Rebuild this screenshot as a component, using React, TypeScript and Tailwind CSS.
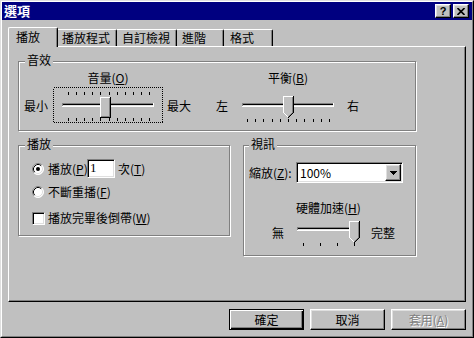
import React from 'react';

const sunken =
  'border border-t-[#808080] border-l-[#808080] border-r-white border-b-white shadow-[inset_1px_1px_#000,inset_-1px_-1px_#dfdfdf]';
const raised =
  'border border-t-white border-l-white border-r-black border-b-black shadow-[inset_-1px_-1px_#808080,inset_1px_1px_#dfdfdf]';
const etched = 'relative border border-[#808080] shadow-[inset_1px_1px_#fff,1px_1px_#fff]';

function Track({ x, y, w }: { x: number; y: number; w: number }) {
  return (
    <g>
      <rect x={x} y={y} width={w} height={1} fill="#808080" />
      <rect x={x} y={y} width={1} height={3} fill="#808080" />
      <rect x={x + 1} y={y + 1} width={w - 2} height={1} fill="#000" />
      <rect x={x + 1} y={y + 2} width={w - 2} height={1} fill="#dfdfdf" />
      <rect x={x} y={y + 3} width={w} height={1} fill="#fff" />
      <rect x={x + w - 1} y={y} width={1} height={4} fill="#fff" />
    </g>
  );
}

function RectThumb({ x, y, w, h }: { x: number; y: number; w: number; h: number }) {
  return (
    <g>
      <rect x={x} y={y} width={w} height={h} fill="#c0c0c0" />
      <rect x={x} y={y} width={w - 1} height={1} fill="#fff" />
      <rect x={x} y={y} width={1} height={h - 1} fill="#fff" />
      <rect x={x + w - 1} y={y} width={1} height={h} fill="#000" />
      <rect x={x} y={y + h - 1} width={w} height={1} fill="#000" />
      <rect x={x + w - 2} y={y + 1} width={1} height={h - 2} fill="#808080" />
      <rect x={x + 1} y={y + h - 2} width={w - 2} height={1} fill="#808080" />
    </g>
  );
}

// thumb with a point at the bottom, 11px wide
function PointThumb({ x, y, body }: { x: number; y: number; body: number }) {
  const diag = [1, 2, 3, 4, 5];
  return (
    <g>
      <rect x={x} y={y} width={11} height={body + 1} fill="#c0c0c0" />
      {diag.map((k) => (
        <rect key={'f' + k} x={x + k} y={y + body + k} width={Math.max(11 - 2 * k, 1)} height={1} fill="#c0c0c0" />
      ))}
      <rect x={x} y={y} width={10} height={1} fill="#fff" />
      <rect x={x} y={y} width={1} height={body + 1} fill="#fff" />
      {diag.map((k) => (
        <rect key={'w' + k} x={x + k} y={y + body + k} width={1} height={1} fill="#fff" />
      ))}
      <rect x={x + 9} y={y + 1} width={1} height={body} fill="#808080" />
      {[1, 2, 3, 4].map((k) => (
        <rect key={'g' + k} x={x + 9 - k} y={y + body + k} width={1} height={1} fill="#808080" />
      ))}
      <rect x={x + 10} y={y} width={1} height={body + 1} fill="#000" />
      {diag.map((k) => (
        <rect key={'b' + k} x={x + 10 - k} y={y + body + k} width={1} height={1} fill="#000" />
      ))}
    </g>
  );
}

function Ticks({ xs, y, h }: { xs: number[]; y: number; h: number }) {
  return (
    <g>
      {xs.map((x, i) => (
        <rect key={i} x={x} y={y} width={1} height={h} fill="#000" />
      ))}
    </g>
  );
}

const volTicks = Array.from({ length: 11 }, (_, i) => Math.round(15 + i * 8.1));
const balTicks = Array.from({ length: 11 }, (_, i) => Math.round(9 + i * 8.2));

function Radio({ checked }: { checked?: boolean }) {
  return (
    <svg width="12" height="12" viewBox="0 0 12 12" className="block shrink-0">
      <circle cx="6" cy="6" r="5.5" fill="#fff" />
      <path d="M2.11 9.89 A5.5 5.5 0 0 1 9.89 2.11" stroke="#808080" fill="none" />
      <path d="M9.89 2.11 A5.5 5.5 0 0 1 2.11 9.89" stroke="#fff" fill="none" />
      <path d="M2.82 9.18 A4.5 4.5 0 0 1 9.18 2.82" stroke="#000" fill="none" />
      <path d="M9.18 2.82 A4.5 4.5 0 0 1 2.82 9.18" stroke="#dfdfdf" fill="none" />
      {checked && <circle cx="6" cy="6" r="2" fill="#000" />}
    </svg>
  );
}

export default function App() {
  return (
    <div className="w-[474px] h-[338px] bg-[#c0c0c0] border border-t-[#dfdfdf] border-l-[#dfdfdf] border-r-black border-b-black font-['Noto_Sans_CJK_TC',sans-serif] text-[12px] leading-[14px] text-black overflow-hidden">
      <div className="h-full flex flex-col border border-t-white border-l-white border-r-[#808080] border-b-[#808080]">
        {/* title bar */}
        <div className="h-[18px] shrink-0 bg-[#000080] flex items-center pl-[2px] pr-[3px]">
          <span className="text-white font-bold text-[13px] leading-[14px]">選項</span>
          <div className="ml-auto flex gap-[2px]">
            <div className={`w-[16px] h-[14px] bg-[#c0c0c0] flex items-center justify-center font-['Liberation_Sans',sans-serif] font-bold text-[11px] leading-[11px] ${raised}`}>
              ?
            </div>
            <div className={`w-[16px] h-[14px] bg-[#c0c0c0] flex items-center justify-center ${raised}`}>
              <svg width="8" height="7" viewBox="0 0 8 7" className="block">
                <path d="M0.5 0 L7.5 7 M7.5 0 L0.5 7" stroke="#000" strokeWidth="1.6" />
              </svg>
            </div>
          </div>
        </div>

        {/* tabs */}
        <div className="flex items-end h-[20px] mt-[7px] pl-[6px] shrink-0">
          <div className="relative z-10 w-[50px] h-[20px] bg-[#c0c0c0] border-l border-t border-r border-l-white border-t-white border-r-black shadow-[inset_-1px_0_#808080] rounded-tl-[2px] rounded-tr-[2px] pl-[7px] pt-[2px] whitespace-nowrap">
            播放
          </div>
          <div className="w-[59px] h-[17px] mb-[1px] border-t border-r border-t-white border-r-black shadow-[inset_-1px_0_#808080] rounded-tr-[2px] pl-[4px] pt-[1px] whitespace-nowrap">
            播放程式
          </div>
          <div className="w-[60px] h-[17px] mb-[1px] border-t border-r border-t-white border-r-black shadow-[inset_-1px_0_#808080] rounded-tr-[2px] pl-[5px] pt-[1px] whitespace-nowrap">
            自訂檢視
          </div>
          <div className="w-[47px] h-[17px] mb-[1px] border-t border-r border-t-white border-r-black shadow-[inset_-1px_0_#808080] rounded-tr-[2px] pl-[5px] pt-[1px] whitespace-nowrap">
            進階
          </div>
          <div className="w-[49px] h-[17px] mb-[1px] border-t border-r border-t-white border-r-black shadow-[inset_-1px_0_#808080] rounded-tr-[2px] pl-[6px] pt-[1px] whitespace-nowrap">
            格式
          </div>
        </div>

        {/* panel */}
        <div className="-mt-[1px] mx-[6px] h-[256px] shrink-0 border border-t-white border-l-white border-r-black border-b-black shadow-[inset_-1px_-1px_#808080] pl-[9px] pt-[14px]">
          {/* 音效 */}
          <div className={`${etched} w-[398px] h-[70px]`}>
            <span className="absolute -top-[9px] left-[6px] px-[2px] bg-[#c0c0c0]">音效</span>
            <div className="flex items-start whitespace-nowrap">
              <span className="ml-[5px] mt-[37px] w-[24px] shrink-0">最小</span>
              <div className="ml-[5px] mt-[9px] w-[110px] shrink-0 flex flex-col items-center">
                <span>
                  音量(<u>O</u>)
                </span>
                <svg width="110" height="36" className="block mt-[2px]" shapeRendering="crispEdges">
                  <rect x="0.5" y="0.5" width="109" height="35" fill="none" stroke="#000" strokeDasharray="1 1" />
                  <Ticks xs={volTicks} y={5} h={3} />
                  <Ticks xs={volTicks} y={31} h={3} />
                  <Track x={9} y={16} w={92} />
                  <RectThumb x={47} y={10} w={11} h={21} />
                </svg>
              </div>
              <span className="ml-[4px] mt-[37px] w-[24px] shrink-0">最大</span>
              <span className="ml-[25px] mt-[37px] w-[12px] shrink-0">左</span>
              <div className="ml-[10px] mt-[9px] w-[100px] shrink-0 flex flex-col items-center">
                <span>
                  平衡(<u>B</u>)
                </span>
                <svg width="100" height="28" className="block mt-[10px]" shapeRendering="crispEdges">
                  <Track x={4} y={8} w={92} />
                  <Ticks xs={balTicks} y={24} h={3} />
                  <PointThumb x={45} y={1} body={16} />
                </svg>
              </div>
              <span className="ml-[9px] mt-[37px]">右</span>
            </div>
          </div>

          <div className="flex items-start gap-[13px] mt-[14px]">
            {/* 播放 */}
            <div className={`${etched} w-[212px] h-[91px] shrink-0 whitespace-nowrap`}>
              <span className="absolute -top-[9px] left-[6px] px-[2px] bg-[#c0c0c0]">播放</span>
              <div className="flex items-center mt-[13px] ml-[13px] h-[19px]">
                <Radio checked />
                <span className="ml-[4px] w-[39px] shrink-0">
                  播放(<u>P</u>)
                </span>
                <div className={`w-[28px] h-[19px] shrink-0 bg-white pl-[2px] leading-[15px] font-['Liberation_Serif',serif] text-[13px] ${sunken}`}>
                  1
                </div>
                <span className="ml-[3px]">
                  次(<u>T</u>)
                </span>
              </div>
              <div className="flex items-center mt-[6px] ml-[13px] h-[16px]">
                <Radio />
                <span className="ml-[4px]">
                  不斷重播(<u>F</u>)
                </span>
              </div>
              <div className="flex items-center mt-[10px] ml-[13px] h-[16px]">
                <div className={`w-[13px] h-[13px] shrink-0 bg-white ${sunken}`} />
                <span className="ml-[3px]">
                  播放完畢後倒帶(<u>W</u>)
                </span>
              </div>
            </div>

            {/* 視訊 */}
            <div className={`${etched} w-[173px] h-[111px] shrink-0 whitespace-nowrap`}>
              <span className="absolute -top-[9px] left-[5px] px-[2px] bg-[#c0c0c0]">視訊</span>
              <div className="flex items-center mt-[16px] ml-[5px] h-[21px]">
                <span className="w-[47px] shrink-0">
                  縮放(<u>Z</u>):
                </span>
                <div className={`w-[107px] h-[21px] shrink-0 bg-white flex items-center pl-[3px] pr-[1px] ${sunken}`}>
                  <span className="flex-1">100%</span>
                  <div className={`w-[16px] h-[17px] bg-[#c0c0c0] flex items-center justify-center ${raised}`}>
                    <svg width="7" height="4" viewBox="0 0 7 4" className="block" shapeRendering="crispEdges">
                      <rect x="0" y="0" width="7" height="1" fill="#000" />
                      <rect x="1" y="1" width="5" height="1" fill="#000" />
                      <rect x="2" y="2" width="3" height="1" fill="#000" />
                      <rect x="3" y="3" width="1" height="1" fill="#000" />
                    </svg>
                  </div>
                </div>
              </div>
              <div className="mt-[18px] ml-[52px] w-[64px] text-center">
                硬體加速(<u>H</u>)
              </div>
              <div className="flex items-start mt-[4px]">
                <span className="ml-[28px] mt-[7px] w-[12px] shrink-0">無</span>
                <svg width="70" height="30" className="block ml-[10px] shrink-0" shapeRendering="crispEdges">
                  <Track x={3} y={8} w={63} />
                  <Ticks xs={[9, 26, 43, 60]} y={24} h={3} />
                  <PointThumb x={55} y={2} body={16} />
                </svg>
                <span className="ml-[7px] mt-[7px]">完整</span>
              </div>
            </div>
          </div>
        </div>

        {/* buttons */}
        <div className="flex justify-end gap-[6px] mt-[7px] pr-[6px]">
          <button className="w-[75px] h-[21px] bg-[#c0c0c0] border border-black shadow-[inset_1px_1px_#fff,inset_-1px_-1px_#000,inset_-2px_-2px_#808080] flex items-center justify-center">
            確定
          </button>
          <button className={`w-[75px] h-[21px] bg-[#c0c0c0] flex items-center justify-center ${raised}`}>
            取消
          </button>
          <button className={`w-[75px] h-[21px] bg-[#c0c0c0] flex items-center justify-center text-[#808080] [text-shadow:1px_1px_0_#fff] ${raised}`}>
            套用(<u>A</u>)
          </button>
        </div>
      </div>
    </div>
  );
}
